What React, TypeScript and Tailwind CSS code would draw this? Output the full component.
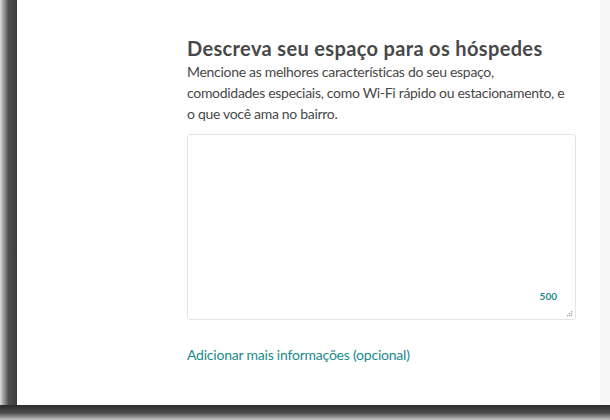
export default function App() {
  return (
    <div className="flex h-[420px] w-[610px] flex-col bg-[#c8c8c8]" style={{ fontFamily: 'Lato, "Noto Sans", sans-serif' }}>
      <div className="flex flex-1">
        <div className="w-[17px] bg-gradient-to-r from-[#dcdcdc] via-[#505050] via-50% to-[#3c3c3c]" />
        <div className="flex-1 bg-white pl-[170px] pt-[36px]">
          <div className="w-[389px]">
            <h1 className="text-[20px] font-bold leading-[24px] tracking-[0.35px] text-[#484848]">
              Descreva seu espaço para os hóspedes
            </h1>
            <p className="mt-[1px] whitespace-nowrap text-[14px] leading-[21px] tracking-[-0.3px] text-[#484848]">
              Mencione as melhores características do seu espaço,
              <br />
              comodidades especiais, como Wi-Fi rápido ou estacionamento, e
              <br />o que você ama no bairro.
            </p>
            <div className="relative mt-[10px] h-[186px] rounded-[3px] border border-[#e4e4e4]">
              <span className="absolute right-[18px] bottom-[15px] text-[10px] font-bold text-[#1c8a8e]">500</span>
              <svg className="absolute right-[2px] bottom-[2px]" width="6" height="6" viewBox="0 0 6 6">
                <rect x="4" y="0" width="1.2" height="1.2" fill="#9a9a9a" />
                <rect x="2" y="2" width="1.2" height="1.2" fill="#9a9a9a" />
                <rect x="4" y="2" width="1.2" height="1.2" fill="#9a9a9a" />
                <rect x="0" y="4" width="1.2" height="1.2" fill="#9a9a9a" />
                <rect x="2" y="4" width="1.2" height="1.2" fill="#9a9a9a" />
                <rect x="4" y="4" width="1.2" height="1.2" fill="#9a9a9a" />
              </svg>
            </div>
            <div className="mt-[25px] text-[14px] leading-[20px] tracking-[-0.22px] text-[#1a8a8c]">
              Adicionar mais informações (opcional)
            </div>
          </div>
        </div>
        <div className="w-[10px] bg-[#f7f7f7]" />
      </div>
      <div className="h-[15px] bg-gradient-to-b from-[#2c2c2c] via-[#4a4a4a] to-[#c4c4c4]" />
    </div>
  );
}
